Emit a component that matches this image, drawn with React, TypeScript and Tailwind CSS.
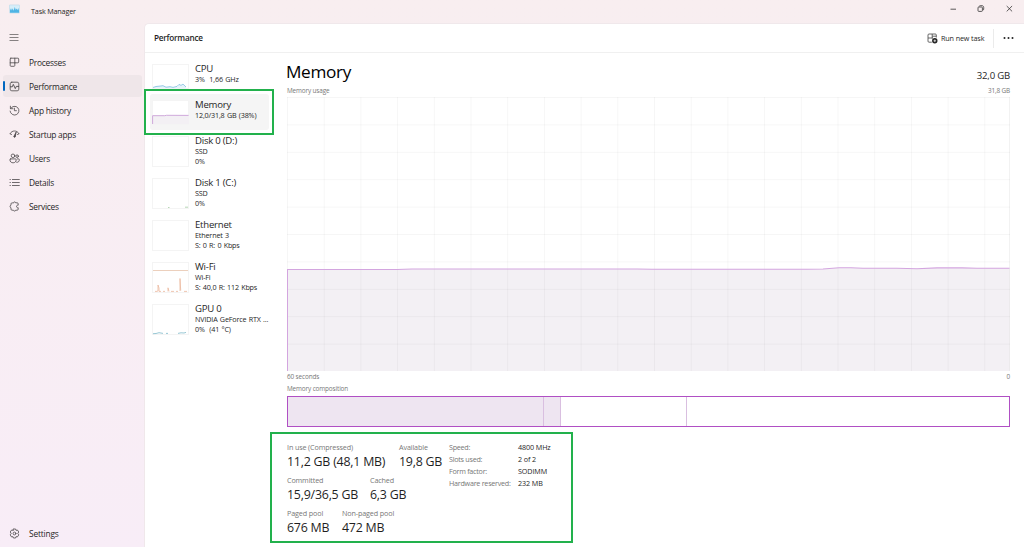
import React, { useState } from 'react';

const navItems = [
  { id: 'processes', label: 'Processes' },
  { id: 'performance', label: 'Performance' },
  { id: 'history', label: 'App history' },
  { id: 'startup', label: 'Startup apps' },
  { id: 'users', label: 'Users' },
  { id: 'details', label: 'Details' },
  { id: 'services', label: 'Services' },
];

const devices = [
  { id: 'cpu', name: 'CPU', lines: ['3%  1,66 GHz'] },
  { id: 'memory', name: 'Memory', lines: ['12,0/31,8 GB (38%)'] },
  { id: 'disk0', name: 'Disk 0 (D:)', lines: ['SSD', '0%'] },
  { id: 'disk1', name: 'Disk 1 (C:)', lines: ['SSD', '0%'] },
  { id: 'ethernet', name: 'Ethernet', lines: ['Ethernet 3', 'S: 0 R: 0 Kbps'] },
  { id: 'wifi', name: 'Wi-Fi', lines: ['Wi-Fi', 'S: 40,0 R: 112 Kbps'] },
  { id: 'gpu', name: 'GPU 0', lines: ['NVIDIA GeForce RTX ...', '0%  (41 °C)'] },
];

const stats = [
  [
    { label: 'In use (Compressed)', value: '11,2 GB (48,1 MB)', width: 'w-[112px]' },
    { label: 'Available', value: '19,8 GB', width: 'w-[50px]' },
  ],
  [
    { label: 'Committed', value: '15,9/36,5 GB', width: 'w-[83px]' },
    { label: 'Cached', value: '6,3 GB', width: 'w-[60px]' },
  ],
  [
    { label: 'Paged pool', value: '676 MB', width: 'w-[55px]' },
    { label: 'Non-paged pool', value: '472 MB', width: 'w-[70px]' },
  ],
];

const specs = [
  ['Speed:', '4800 MHz'],
  ['Slots used:', '2 of 2'],
  ['Form factor:', 'SODIMM'],
  ['Hardware reserved:', '232 MB'],
];

const NavIcon = ({ id }: { id: string }) => (
  <svg width="11" height="11" viewBox="0 0 11 11" fill="none" stroke="#4b474a" strokeWidth="0.8" strokeLinecap="round" strokeLinejoin="round">
    {id === 'processes' && (
      <path d="M1.8 1.2h7.1a.8.8 0 0 1 .8.8v3a.8.8 0 0 1-.8.8H5.8v2.7a.8.8 0 0 1-.8.8H2a.8.8 0 0 1-.8-.8V2a.8.8 0 0 1 .6-.8ZM1.2 5.8h4.6M5.8 1.2v4.6" />
    )}
    {id === 'performance' && (
      <>
        <rect x="1.2" y="1.2" width="8.6" height="8.6" rx="1.6" />
        <path d="M1.4 5.8h1.9l1-2.4 2 4.2 1-2.2h2.3" strokeWidth="0.9" />
      </>
    )}
    {id === 'history' && (
      <path d="M1.4 1.2v2.5h2.5M1.7 3.4a4.4 4.4 0 1 1-.6 2.7M5.4 3.2v2.5h2" />
    )}
    {id === 'startup' && (
      <>
        <path d="M1 4.7C2.2 2.7 3.8 2 5.5 2s3.4.7 4.5 2.7M1.3 4.9l1.2.6M9.7 4.9l-1.2.6" />
        <path d="M7 3.4 5.2 6.8a.8.8 0 1 0 1.2.6Z" fill="#4b474a" />
      </>
    )}
    {id === 'users' && (
      <>
        <circle cx="4" cy="2.8" r="1.8" />
        <circle cx="8.1" cy="3.2" r="1.3" />
        <path d="M1.7 5.9h4.7a.8.8 0 0 1 .8.8c0 2-1.3 3.1-3.1 3.1S.9 8.7.9 6.7a.8.8 0 0 1 .8-.8ZM8.3 5.9H9.5a.8.8 0 0 1 .8.8c0 1.8-1 2.7-2.6 2.6" />
      </>
    )}
    {id === 'details' && (
      <path d="M3.4 2.5h6.9M3.4 5.5h6.9M3.4 8.5h6.9M1 2.5h.4M1 5.5h.4M1 8.5h.4" />
    )}
    {id === 'services' && (
      <path d="M4.4 1.8a1.2 1.2 0 0 1 2.3 0h1.5a1 1 0 0 1 1 1v1.4H8.5a1.3 1.3 0 0 0 0 2.5h.7v1.5a1 1 0 0 1-1 1H6.7a1.2 1.2 0 0 1-2.3 0H3a1 1 0 0 1-1-1V6.7a1.3 1.3 0 0 1 0-2.5V2.8a1 1 0 0 1 1-1Z" />
    )}
    {id === 'settings' && (
      <>
        <path d="m4.4 1 2.2 0 .4 1.4 1.4-.4L9.8 4l-1 1.4 1 1.5-1.4 2L7 8.6 6.6 10H4.4L4 8.6 2.6 9l-1.4-2.1 1-1.5-1-1.4L2.6 2l1.4.4Z" />
        <circle cx="5.5" cy="5.5" r="1.4" />
      </>
    )}
  </svg>
);

const Thumbnail = ({ id, height }: { id: string; height: number }) => (
  <svg width="37" height={height} className="shrink-0" fill="none">
    <rect x="0.5" y="0.5" width="36" height={height - 1} fill="#fff" stroke="#f4f4f4" />
    {id === 'cpu' && (
      <>
        <path d="M1 24 4 22.5l4-.3 3-.5 3 1.5 4-.5 3 1 4-1 2-2 2 1 2-1.3 3 3v1Z" fill="#e5f3fa" />
        <path d="m1 23.5 3-1 4-.4 3-.4 3 1.5 4-.5 3 .7 4-1 2-2 2 1 2-1.3 3 2.9" stroke="#7dbce0" strokeWidth="0.8" />
      </>
    )}
    {id === 'memory' && (
      <>
        <path d="M1 15.5h36V24H1Z" fill="#f3f0f4" />
        <path d="M.6 24v-8.3h12l2-.4 22 .1" stroke="#cfa9db" strokeWidth="1" />
      </>
    )}
    {id === 'disk1' && <path d="M16 29.5h1.5M33 29.2h3" stroke="#a5cda2" strokeWidth="0.8" />}
    {id === 'wifi' && (
      <>
        <path d="M1 8.5h35" stroke="#ecd0bd" />
        <path d="M3 29.4h2l1-.5V23l1 3v3.4h2M11 29.4h2M16 29.4v-3.6l1 3.6M19 29.4h3M24 29.4h2M28 29v-12.5l.7 12M32 29.4h3" stroke="#ebb89d" strokeWidth="0.8" />
      </>
    )}
    {id === 'gpu' && (
      <path d="m1 29.7 3-.2 3-.8 4 .7M14 29.4h2M26 29.4l3-.6 3 .2 2-.6" stroke="#7db9c9" strokeWidth="0.8" />
    )}
  </svg>
);

const UsageChart = () => {
  const columns = Array.from({ length: 20 }, (_, i) => 0.5 + i * 36.7);
  const rows = Array.from({ length: 11 }, (_, i) => 0.5 + i * 27.4);
  const line = 'M.5 172.5H110L125 172H350L365 172.3H520L536 172L552 170.7H564L576 171.2H610L630 171.7L650 170.9H675L690 171.2H722.5';

  return (
    <svg width="723" height="274" className="block" fill="none">
      <path d={`${line}V274H.5Z`} fill="#f3f0f4" />
      {columns.map((x) => (
        <path key={x} d={`M${x} 0V275`} stroke="#000" strokeOpacity="0.035" />
      ))}
      {rows.map((y) => (
        <path key={y} d={`M0 ${y}H723`} stroke="#000" strokeOpacity="0.035" />
      ))}
      <path d="M722.5 0V275" stroke="#000" strokeOpacity="0.05" />
      <path d={line} stroke="#d3a5df" strokeWidth="1.1" />
      <path d="M.5 172V275" stroke="#d3a5df" />
    </svg>
  );
};

const App = () => {
  const [page, setPage] = useState('performance');
  const [device, setDevice] = useState('memory');

  return (
    <div className="relative flex h-[547px] w-[1024px] flex-col overflow-hidden bg-linear-to-b from-[#f8eef0] to-[#f8edf7] font-['Open_Sans',sans-serif] text-[#1f1f1f]">
      <header className="flex h-[23px] shrink-0 items-start justify-between">
        <div className="flex items-start pl-[9px] pt-1">
          <svg width="11" height="10" viewBox="0 0 11 10">
            <rect x="0.4" y="0.9" width="10.2" height="8.2" rx="0.6" fill="#d6eef9" stroke="#b3d5e6" strokeWidth="0.5" />
            <path d="M1 8.8V6.5l1-2.3.9 2.3.8-2.3.9 2.6L5.8 3l1 3 .9-1.5.8 1.8.7-2.3.8 2.5v2.3Z" fill="#4fb4e4" />
          </svg>
          <span className="ml-[11px] mt-px whitespace-nowrap text-[7.2px] leading-[12px] tracking-[-0.16px]">Task Manager</span>
        </div>
        <svg width="74" height="18" viewBox="0 0 74 18" fill="none" stroke="#333" strokeWidth="0.8">
          <path d="M.5 9.2H6M56.7 6l5.4 5.4M62.1 6l-5.4 5.4" />
          <rect x="28" y="7" width="4.4" height="4.4" rx="0.8" />
          <path d="M29.2 6.4c.1-.5.4-.7 1-.7H32c1 0 1.7.7 1.7 1.7v1.7c0 .6-.3 1-.8 1" />
        </svg>
      </header>

      <div className="flex min-h-0 flex-1">
        <nav className="flex w-[144px] shrink-0 flex-col">
          <button className="flex h-[27px] items-center pl-[9px] pt-px">
            <svg width="10" height="9" viewBox="0 0 10 9" stroke="#686466" strokeWidth="0.8">
              <path d="M.5 1.5h9M.5 4.5h9M.5 7.5h9" />
            </svg>
          </button>
          {navItems.map((item) => (
            <button
              key={item.id}
              onClick={() => setPage(item.id)}
              className="flex h-6 items-center pl-[3px]"
            >
              <div className={`flex h-[22px] w-[139px] items-center rounded-[3px] ${page === item.id ? 'bg-[#efe6e9]' : ''}`}>
                <span className={`h-[10px] w-[2px] rounded-full ${page === item.id ? 'bg-[#0067c0]' : ''}`} />
                <span className="ml-[4px] w-5"><NavIcon id={item.id} /></span>
                <span className="whitespace-nowrap pt-px text-[8.4px] leading-[12px] tracking-[-0.25px]">{item.label}</span>
              </div>
            </button>
          ))}
          <button className="mb-[2px] mt-auto flex h-6 items-center pl-[9px]">
            <span className="w-5"><NavIcon id="settings" /></span>
            <span className="pt-px text-[8.4px] leading-[12px] tracking-[-0.18px]">Settings</span>
          </button>
        </nav>

        <main className="flex min-w-0 flex-1 flex-col rounded-tl-[5px] border-l border-t border-[#f0e8eb] bg-white">
          <div className="flex h-[29px] shrink-0 items-center border-b border-[#f0f0f0] pl-[9px]">
            <h1 className="pt-px text-[8.2px] font-semibold tracking-[-0.24px]">Performance</h1>
            <button className="ml-auto flex items-center">
              <svg width="11" height="11" viewBox="0 0 11 11" fill="none" stroke="#444" strokeWidth="0.8">
                <path d="M9.3 4.5V2a1 1 0 0 0-1-1H2a1 1 0 0 0-1 1v6.2a1 1 0 0 0 1 1h2.8M1 5h5M5.2 1v4.4M5.2 3.2h4" />
                <circle cx="7.8" cy="7.8" r="2.7" fill="#222" stroke="none" />
                <path d="M6.5 7.8h2.6M7.8 6.5v2.6" stroke="#fff" strokeWidth="0.7" />
              </svg>
              <span className="ml-[3px] w-[44px] whitespace-nowrap text-left text-[7.2px] tracking-[-0.12px]">Run new task</span>
            </button>
            <span className="ml-2 h-[19px] w-px bg-[#ebebeb]" />
            <svg width="30" height="4" viewBox="0 0 30 4" fill="#222">
              <circle cx="10.5" cy="2" r="1" />
              <circle cx="14.5" cy="2" r="1" />
              <circle cx="18.5" cy="2" r="1" />
            </svg>
          </div>

          <div className="flex min-h-0 flex-1">
            <div className="w-[126px] shrink-0 pl-[5px] pt-[5px]">
              {devices.map((item) => (
                <button
                  key={item.id}
                  onClick={() => setDevice(item.id)}
                  className={`flex w-[119px] rounded-[3px] pl-[2px] pt-[6px] text-left ${item.lines.length > 1 ? 'h-[42px]' : 'h-9'} ${device === item.id ? 'bg-[#f5f5f5]' : ''}`}
                >
                  <Thumbnail id={item.id} height={item.lines.length > 1 ? 31 : 25} />
                  <div className="-mt-px ml-[6px] whitespace-pre">
                    <div className="text-[9.6px] leading-[11px] tracking-[-0.24px]">{item.name}</div>
                    {item.lines.map((line) => (
                      <div key={line} className="text-[7.2px] leading-[10px] tracking-[-0.16px] [word-spacing:0.6px]">{line}</div>
                    ))}
                  </div>
                </button>
              ))}
            </div>

            <section className="ml-4 flex w-[723px] shrink-0 flex-col">
              <div className="flex h-[33px] items-end justify-between">
                <h2 className="-ml-px text-[17.2px] leading-[28px] tracking-[-0.34px] text-black">Memory</h2>
                <span className="text-[9.6px] leading-[20px] tracking-[-0.2px]">32,0 GB</span>
              </div>
              <div className="flex h-[11px] items-center justify-between pb-px text-[6.4px] tracking-[-0.14px] text-[#777]">
                <span>Memory usage</span>
                <span>31,8 GB</span>
              </div>
              <UsageChart />
              <div className="flex h-3 items-center justify-between text-[6.4px] tracking-[-0.12px] text-[#777]">
                <span>60 seconds</span>
                <span>0</span>
              </div>
              <div className="flex h-[13px] items-center pb-px text-[6.4px] tracking-[-0.13px] text-[#777]">Memory composition</div>
              <div className="flex h-[31px] border border-[#b04fc4]">
                <div className="w-[256px] border-r border-[#d9bfe0] bg-[#eee5f1]" />
                <div className="w-[17px] border-r border-[#d9bfe0] bg-[#eee5f1]" />
                <div className="w-[126px] border-r border-[#d9bfe0]" />
              </div>

              <div className="flex pt-[14px]">
                <div className="w-[162px]">
                  {stats.map((row) => (
                    <div key={row[0].label} className="flex h-[33px] whitespace-nowrap">
                      {row.map((stat) => (
                        <div key={stat.label} className={`shrink-0 ${stat.width}`}>
                          <div className="text-[7.2px] leading-[12px] tracking-[-0.13px] text-[#777]">{stat.label}</div>
                          <div className="text-[12.4px] leading-[17px] tracking-[-0.22px]">{stat.value}</div>
                        </div>
                      ))}
                    </div>
                  ))}
                </div>
                <div className="whitespace-nowrap text-[7.2px] leading-[12px] tracking-[-0.1px]">
                  {specs.map(([label, value]) => (
                    <div key={label} className="flex">
                      <span className="w-[69px] tracking-[-0.26px] text-[#777]">{label}</span>
                      <span>{value}</span>
                    </div>
                  ))}
                </div>
              </div>
            </section>
          </div>
        </main>
      </div>

      {/* highlights over the memory entry and its figures */}
      <div className="pointer-events-none absolute left-[144px] top-[89px] h-[46px] w-[130px] border-2 border-[#22b14c]" />
      <div className="pointer-events-none absolute left-[270px] top-[432px] h-[111px] w-[303px] border-2 border-[#22b14c]" />
    </div>
  );
};

export default App;
